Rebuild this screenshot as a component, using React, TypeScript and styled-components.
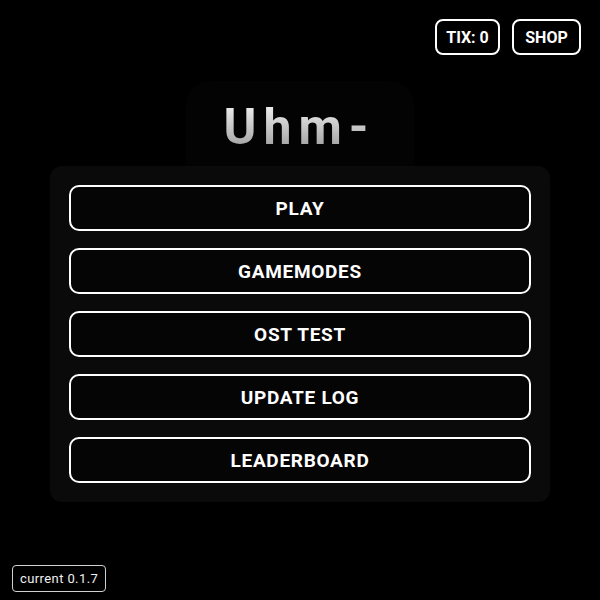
import React from "react";
import styled, { createGlobalStyle } from "styled-components";

const Global = createGlobalStyle`
  html, body { margin: 0; padding: 0; background: #000; }
  body { font-family: Roboto, "Liberation Sans", Arial, sans-serif; color: #fff; }
  * { box-sizing: border-box; }
`;

const Page = styled.div`
  width: 600px;
  height: 600px;
  position: relative;
  background: #000;
  display: flex;
  flex-direction: column;
  align-items: center;
`;

const TopBar = styled.div`
  align-self: stretch;
  display: flex;
  justify-content: flex-end;
  gap: 12px;
  padding: 19px 19px 0 0;
`;

const TopButton = styled.button<{ $w: number }>`
  width: ${(p) => p.$w}px;
  height: 36px;
  background: #000;
  color: #fff;
  border: 2px solid #fff;
  border-radius: 8px;
  font-family: Roboto, "Liberation Sans", Arial, sans-serif;
  font-weight: 700;
  font-size: 16px;
  padding: 0;
  display: flex;
  align-items: center;
  justify-content: center;
`;

const TitleBox = styled.div`
  margin-top: 26px;
  width: 228px;
  height: 85px;
  border-radius: 24px 24px 0 0;
  background: #030303;
  display: flex;
  align-items: flex-end;
  justify-content: center;
  padding-bottom: 14px;
  padding-right: 8px;
`;

const Title = styled.h1`
  margin: 0;
  font-family: Roboto, "Liberation Sans", Arial, sans-serif;
  font-weight: 700;
  font-size: 50px;
  line-height: 50px;
  letter-spacing: 7px;
  padding-left: 7px;
  background: linear-gradient(180deg, #f4f4f4 0%, #9a9a9a 100%);
  -webkit-background-clip: text;
  background-clip: text;
  color: transparent;
`;

const Panel = styled.div`
  width: 500px;
  background: #0a0a0a;
  border-radius: 12px;
  padding: 19px;
  display: flex;
  flex-direction: column;
  gap: 17px;
`;

const MenuButton = styled.button`
  height: 46px;
  width: 100%;
  background: #050505;
  color: #fff;
  border: 2px solid #fff;
  border-radius: 10px;
  font-family: Roboto, "Liberation Sans", Arial, sans-serif;
  font-weight: 700;
  font-size: 19px;
  letter-spacing: 0.7px;
  display: flex;
  align-items: center;
  justify-content: center;
  padding: 0;
`;

const Version = styled.div`
  position: absolute;
  left: 12px;
  bottom: 8px;
  height: 27px;
  padding: 0 7px;
  border: 1px solid #d0d0d0;
  border-radius: 4px;
  font-size: 13px;
  letter-spacing: 0.4px;
  color: #f0f0f0;
  display: flex;
  align-items: center;
`;

const items = ["PLAY", "GAMEMODES", "OST TEST", "UPDATE LOG", "LEADERBOARD"];

export default function App() {
  return (
    <Page>
      <Global />
      <TopBar>
        <TopButton $w={65}>TIX: 0</TopButton>
        <TopButton $w={69}>SHOP</TopButton>
      </TopBar>
      <TitleBox>
        <Title>Uhm-</Title>
      </TitleBox>
      <Panel>
        {items.map((t) => (
          <MenuButton key={t}>{t}</MenuButton>
        ))}
      </Panel>
      <Version>current 0.1.7</Version>
    </Page>
  );
}
